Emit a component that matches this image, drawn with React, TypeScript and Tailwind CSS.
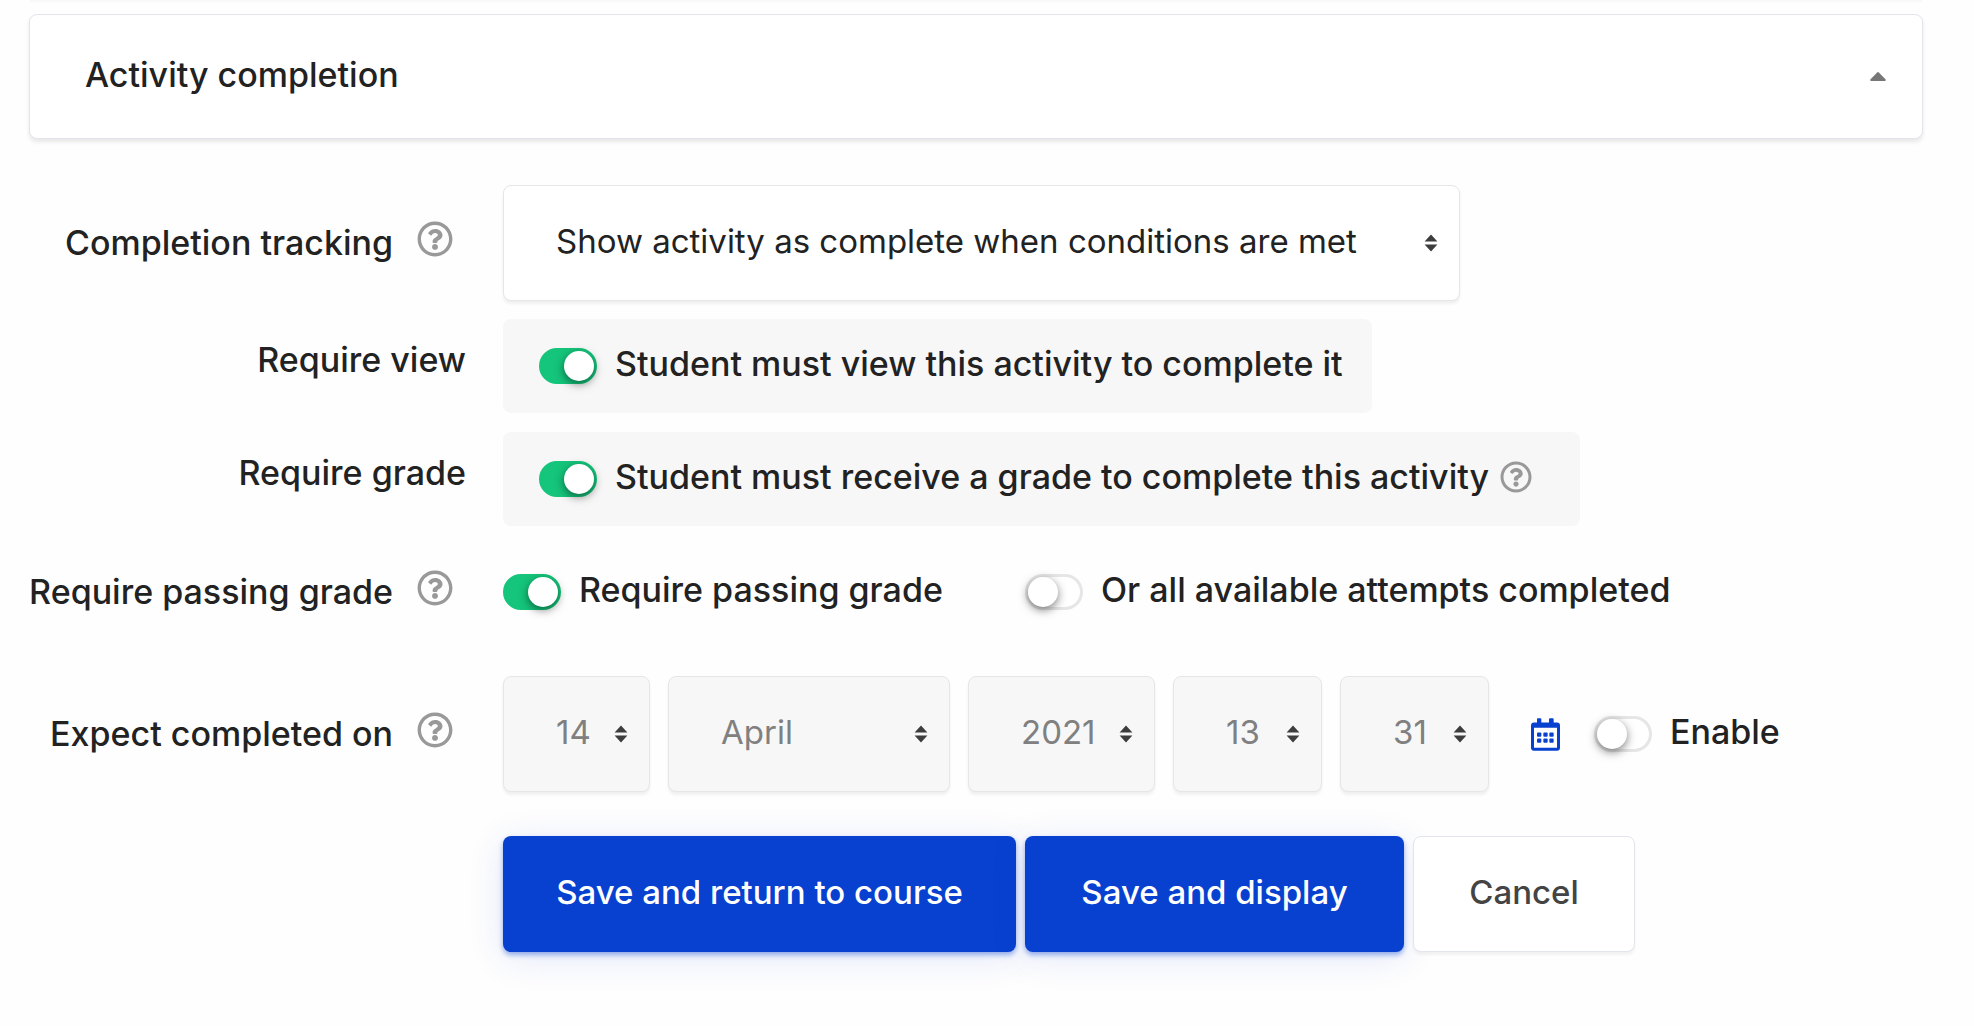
import React, { useState } from 'react';
import { FaRegQuestionCircle } from 'react-icons/fa';

const HelpButton: React.FC<{ topic: string; small?: boolean }> = ({ topic, small }) => (
    <button type="button" aria-label={`Help with ${topic}`} className={`flex shrink-0 text-[#999999] ${small ? 'pb-1' : 'pb-2'}`}>
        <FaRegQuestionCircle className={small ? 'size-8' : 'size-9'} />
    </button>
);

const SortArrows: React.FC = () => (
    <svg viewBox="0 0 14 18" className="pointer-events-none absolute right-[22px] top-1/2 h-[18px] w-[14px] -translate-y-1/2 fill-[#3d3d3d]">
        <path d="M7 .5L13.4 7.4H.6zM7 17.5L.6 10.6h12.8z" />
    </svg>
);

const CalendarIcon: React.FC = () => (
    <svg viewBox="0 0 87 98" className="h-[33px] w-[29px] fill-[#0840cf]">
        <path
            fillRule="evenodd"
            d="M20 0h8q3 0 3 3v10h23V3q0-3 3-3h8q3 0 3 3v10h10q9 0 9 9v67q0 9-9 9H9q-9 0-9-9V22q0-9 9-9h9V3q0-3 2-3zM9 29v60h69V29z"
        />
        {[18, 37, 55].map((x) => (
            <g key={x}>
                <rect x={x} y="43" width="13" height="13" rx="3" />
                <rect x={x} y="61" width="13" height="13" rx="3" />
            </g>
        ))}
    </svg>
);

interface SwitchProps {
    id: string;
    label: string;
    defaultChecked?: boolean;
}

const Switch: React.FC<SwitchProps> = ({ id, label, defaultChecked }) => (
    <div className="flex items-center gap-[18px]">
        <input
            id={id}
            type="checkbox"
            defaultChecked={defaultChecked}
            className="h-9 w-[58px] shrink-0 appearance-none rounded-full border-[3px] border-[#e6e6e6] bg-white before:block before:size-[30px] before:rounded-full before:bg-white before:shadow-[0_3px_10px_rgba(0,0,0,0.5)] before:content-[''] checked:border-[#14c57b] checked:bg-[#14c57b] checked:before:ml-[22px]"
        />
        <label htmlFor={id} className="whitespace-nowrap pb-1">{label}</label>
    </div>
);

interface SelectProps {
    id?: string;
    label?: string;
    options: string[];
    width: string;
    disabled?: boolean;
}

const Select: React.FC<SelectProps> = ({ id, label, options, width, disabled }) => (
    <div className={`relative ${width}`}>
        <select
            id={id}
            aria-label={label}
            disabled={disabled}
            className="h-[116px] w-full appearance-none rounded-lg border border-[#e6e6e6] bg-white pb-1 pl-[52px] text-[33px] font-normal text-[#222222] shadow-[0_3px_3px_rgba(0,0,0,0.06)] disabled:bg-[#f7f7f7] disabled:text-[#808080] disabled:opacity-100"
        >
            {options.map((option) => (
                <option key={option}>{option}</option>
            ))}
        </select>
        <SortArrows />
    </div>
);

interface RowProps {
    label?: string;
    htmlFor?: string;
    help?: boolean;
    className?: string;
    children: React.ReactNode;
}

const Row: React.FC<RowProps> = ({ label, htmlFor, help, className = '', children }) => (
    <div className={`grid grid-cols-[474px_1fr] items-center ${className}`}>
        <div className={`flex items-center justify-end gap-6 ${help ? 'pr-[50px]' : 'pb-3 pr-[37px]'}`}>
            {label && <label htmlFor={htmlFor} className="whitespace-nowrap">{label}</label>}
            {help && label && <HelpButton topic={label} />}
        </div>
        <div className="flex items-center">{children}</div>
    </div>
);

const App: React.FC = () => {
    const [open, setOpen] = useState(true);

    return (
        <div className="min-h-screen bg-[#fefefe] font-['Inter',sans-serif] text-[34px] leading-[48px] font-medium text-[#222222]">
            {/* bottom edge of the previous section */}
            <div className="ml-[30px] mr-[52px] h-[3px] bg-linear-to-b from-[#f7f7f7] to-[#fcfcfc]" />
            <form className="pt-[11px] pl-[29px]" onSubmit={(event) => event.preventDefault()}>
                <h2 className="mr-[51px]">
                    <button
                        type="button"
                        aria-expanded={open}
                        onClick={() => setOpen(!open)}
                        className="flex h-[125px] w-full items-center justify-between rounded-lg border border-[#e2e5ee] bg-white pl-[55px] pr-9 shadow-[0_3px_4px_rgba(0,0,0,0.09)]"
                    >
                        <span className="pb-1">Activity completion</span>
                        <svg viewBox="0 0 16 9" className={`h-[9px] w-4 fill-[#777777] ${open ? '' : 'rotate-180'}`}>
                            <path d="M7.2.4q.8-.7 1.6 0l6.7 6.9q.8 1.4-.7 1.7H1.2q-1.5-.3-.7-1.7z" />
                        </svg>
                    </button>
                </h2>

                {open && (
                    <div className="mt-[46px]">
                        <Row label="Completion tracking" htmlFor="tracking" help>
                            <Select id="tracking" width="w-[957px]" options={['Show activity as complete when conditions are met']} />
                        </Row>
                        <Row label="Require view" htmlFor="view" className="mt-[18px]">
                            <div className="flex h-[94px] w-[869px] items-center rounded-lg bg-[#f7f7f7] pl-9">
                                <Switch id="view" label="Student must view this activity to complete it" defaultChecked />
                            </div>
                        </Row>
                        <Row label="Require grade" htmlFor="grade" className="mt-[19px]">
                            <div className="flex h-[94px] w-[1077px] items-center justify-between rounded-lg bg-[#f7f7f7] pl-9 pr-12">
                                <Switch id="grade" label="Student must receive a grade to complete this activity" defaultChecked />
                                <HelpButton topic="Require grade" small />
                            </div>
                        </Row>
                        <Row label="Require passing grade" htmlFor="passing" help className="mt-10">
                            <div className="w-[522px]">
                                <Switch id="passing" label="Require passing grade" defaultChecked />
                            </div>
                            <Switch id="attempts" label="Or all available attempts completed" />
                        </Row>
                        <Row label="Expect completed on" htmlFor="day" help className="mt-[58px]">
                            <div className="flex gap-[18px]">
                                <Select id="day" width="w-[147px]" options={['14']} disabled />
                                <Select label="Month" width="w-[282px]" options={['April']} disabled />
                                <Select label="Year" width="w-[187px]" options={['2021']} disabled />
                                <Select label="Hour" width="w-[149px]" options={['13']} disabled />
                                <Select label="Minute" width="w-[149px]" options={['31']} disabled />
                            </div>
                            <button type="button" aria-label="Calendar" className="ml-[42px] mr-[34px]">
                                <CalendarIcon />
                            </button>
                            <Switch id="enable" label="Enable" />
                        </Row>
                    </div>
                )}

                <Row className="mt-11">
                    <div className="flex gap-[9px] text-[33px]">
                        <button
                            type="submit"
                            className="h-[116px] w-[513px] rounded-lg bg-[#0840cf] pb-1 text-white shadow-[0_3px_5px_rgba(8,64,207,0.4),0_6px_36px_rgba(8,64,207,0.12)]"
                        >
                            Save and return to course
                        </button>
                        <button
                            type="submit"
                            className="h-[116px] w-[379px] rounded-lg bg-[#0840cf] pb-1 text-white shadow-[0_3px_5px_rgba(8,64,207,0.4),0_6px_36px_rgba(8,64,207,0.12)]"
                        >
                            Save and display
                        </button>
                        <button
                            type="button"
                            className="h-[116px] w-[222px] rounded-lg border border-[#e2e5ee] bg-white pb-1 text-[#444444] shadow-[0_3px_3px_rgba(0,0,0,0.05)]"
                        >
                            Cancel
                        </button>
                    </div>
                </Row>
            </form>
        </div>
    );
};

export default App;
